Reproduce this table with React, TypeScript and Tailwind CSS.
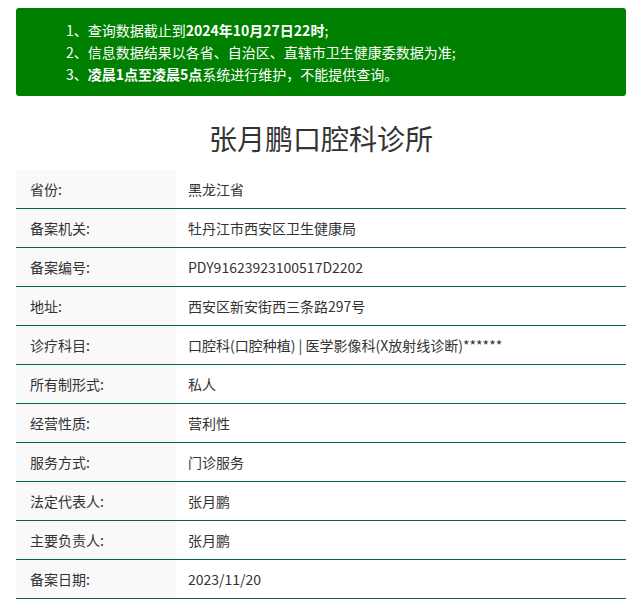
import React from "react";

const rows: [string, string][] = [
  ["省份:", "黑龙江省"],
  ["备案机关:", "牡丹江市西安区卫生健康局"],
  ["备案编号:", "PDY91623923100517D2202"],
  ["地址:", "西安区新安街西三条路297号"],
  ["诊疗科目:", "口腔科(口腔种植) | 医学影像科(X放射线诊断)******"],
  ["所有制形式:", "私人"],
  ["经营性质:", "营利性"],
  ["服务方式:", "门诊服务"],
  ["法定代表人:", "张月鹏"],
  ["主要负责人:", "张月鹏"],
  ["备案日期:", "2023/11/20"],
];

export default function App() {
  return (
    <div
      className="w-[644px] h-[608px] bg-white pl-4 pr-[18px] pt-2 text-[#333]"
      style={{ fontFamily: '"Microsoft YaHei", "Noto Sans CJK SC", "Noto Sans", sans-serif' }}
    >
      <div className="bg-[#008000] rounded-[3px] pl-[50px] py-[11px] text-white text-[14px] leading-[22px]">
        <div>
          1、查询数据截止到<span className="font-bold">2024年10月27日22时</span>;
        </div>
        <div>2、信息数据结果以各省、自治区、直辖市卫生健康委数据为准;</div>
        <div>
          3、<span className="font-bold">凌晨1点至凌晨5点</span>系统进行维护，不能提供查询。
        </div>
      </div>
      <h1 className="mt-[22px] mb-[12px] text-center text-[28px] leading-[40px] text-[#333]">
        张月鹏口腔科诊所
      </h1>
      <div className="flex flex-col">
        {rows.map(([k, v]) => (
          <div key={k} className="flex h-[39px] border-b border-[#00693e] text-[14px]">
            <div className="w-[160px] bg-[#f9f9f9] pl-[14px] flex items-center">{k}</div>
            <div className="flex-1 pl-[12px] flex items-center">{v}</div>
          </div>
        ))}
      </div>
    </div>
  );
}
